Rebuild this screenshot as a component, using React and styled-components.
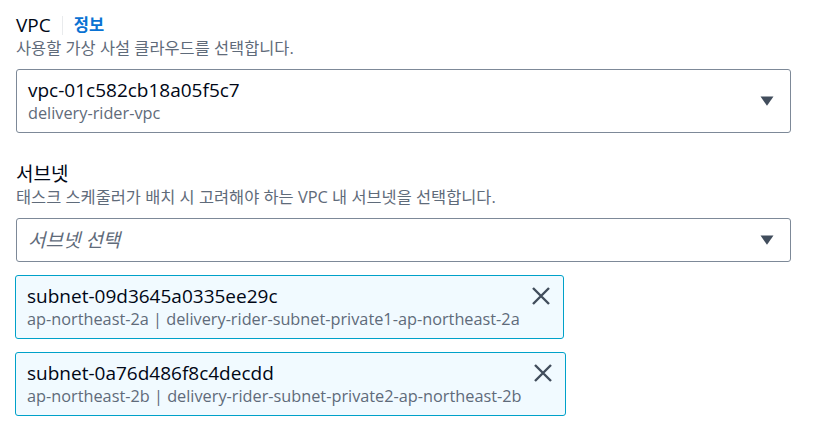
import React from 'react'
import styled, { createGlobalStyle } from 'styled-components'

const GlobalStyle = createGlobalStyle`
  body {
    margin: 0;
    background: #ffffff;
    font-family: "Open Sans", "Noto Sans CJK KR", sans-serif;
    color: #000716;
  }
`

const subnets = [
  {
    id: 'subnet-09d3645a0335ee29c',
    desc: 'ap-northeast-2a | delivery-rider-subnet-private1-ap-northeast-2a'
  },
  {
    id: 'subnet-0a76d486f8c4decdd',
    desc: 'ap-northeast-2b | delivery-rider-subnet-private2-ap-northeast-2b'
  }
]

function Caret() {
  return (
    <CaretIcon viewBox="0 0 14 10" width="14" height="10">
      <path d="M0.5 0.5 H13.5 L7 9.8 Z" fill="#414d5c" />
    </CaretIcon>
  )
}

function CloseIcon() {
  return (
    <svg viewBox="0 0 20 20" width="20" height="20">
      <path d="M2 2 L18 18 M18 2 L2 18" stroke="#414d5c" strokeWidth="2.4" fill="none" />
    </svg>
  )
}

export default function App() {
  return (
    <Page>
      <GlobalStyle />
      <Field>
        <LabelRow>
          <Label>VPC</Label>
          <Divider />
          <InfoLink>정보</InfoLink>
        </LabelRow>
        <Description>사용할 가상 사설 클라우드를 선택합니다.</Description>
        <Select>
          <SelectText>
            <MainText>vpc-01c582cb18a05f5c7</MainText>
            <SubText>delivery-rider-vpc</SubText>
          </SelectText>
          <Caret />
        </Select>
      </Field>

      <Field $second>
        <LabelRow>
          <Label>서브넷</Label>
        </LabelRow>
        <Description>태스크 스케줄러가 배치 시 고려해야 하는 VPC 내 서브넷을 선택합니다.</Description>
        <Select $compact>
          <Placeholder>서브넷 선택</Placeholder>
          <Caret />
        </Select>
        <TokenList>
          {subnets.map(s => (
            <Token key={s.id}>
              <SelectText>
                <MainText>{s.id}</MainText>
                <SubText>{s.desc}</SubText>
              </SelectText>
              <CloseBtn>
                <CloseIcon />
              </CloseBtn>
            </Token>
          ))}
        </TokenList>
      </Field>
    </Page>
  )
}

/* ==== Styled ==== */
const Page = styled.div`
  padding: 14px 22px 0 16px;
  width: 775px;
`
const Field = styled.div`
  display: flex;
  flex-direction: column;
  margin-top: ${p => (p.$second ? '30px' : '0')};
`
const LabelRow = styled.div`
  display: flex;
  align-items: center;
  height: 22px;
`
const Label = styled.span`
  font-size: 19px;
  line-height: 22px;
  color: #000716;
`
const Divider = styled.span`
  width: 1px;
  height: 19px;
  background: #e9ebed;
  margin: 0 11px 0 11px;
`
const InfoLink = styled.span`
  font-size: 16.5px;
  font-weight: 700;
  color: #0972d3;
  line-height: 22px;
`
const Description = styled.div`
  font-size: 16.4px;
  line-height: 24px;
  color: #5f6b7a;
`
const Select = styled.div`
  display: flex;
  align-items: center;
  justify-content: space-between;
  margin-top: 9px;
  height: ${p => (p.$compact ? '44px' : '64px')};
  box-sizing: border-box;
  padding: 0 16px 0 11px;
  border: 1px solid #7d8998;
  border-radius: 3px;
  background: #ffffff;
`
const SelectText = styled.div`
  display: flex;
  flex-direction: column;
`
const MainText = styled.span`
  font-size: 19px;
  line-height: 24px;
  color: #000716;
`
const SubText = styled.span`
  font-size: 16.3px;
  line-height: 22px;
  color: #5f6b7a;
`
const Placeholder = styled.span`
  font-size: 19px;
  font-style: italic;
  line-height: 26px;
  color: #5f6b7a;
`
const CaretIcon = styled.svg`
  display: block;
  flex-shrink: 0;
`
const TokenList = styled.div`
  display: flex;
  flex-direction: column;
  align-items: flex-start;
  gap: 13px;
  margin-top: 13px;
`
const Token = styled.div`
  display: flex;
  align-items: flex-start;
  gap: 11px;
  height: 64px;
  box-sizing: border-box;
  padding: 8px 12px 0 11px;
  margin-left: -1px;
  border: 1px solid #00a1c9;
  border-radius: 3px;
  background: #f1faff;
`
const CloseBtn = styled.span`
  display: flex;
  padding-top: 2px;
  margin-left: auto;
`
